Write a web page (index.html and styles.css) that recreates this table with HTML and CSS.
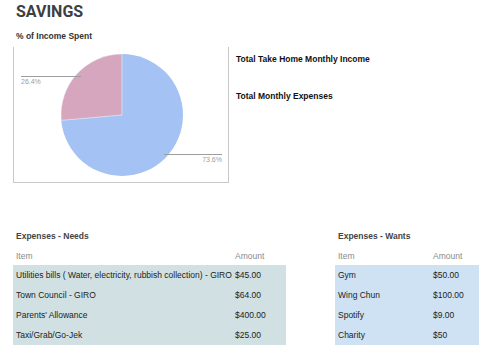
FILE: index.html
```html
<!DOCTYPE html>
<html>
<head>
<meta charset="utf-8">
<link rel="stylesheet" href="styles.css">
</head>
<body>
<div class="page">
  <h1 class="title">SAVINGS</h1>
  <div class="subtitle">% of Income Spent</div>
  <div class="top-row">
    <div class="chart-box">
      <svg class="pie" width="214" height="135" viewBox="0 0 214 135">
        <circle cx="108" cy="68" r="61" fill="#a4c2f4"/>
        <path d="M108 68 L108 7 A61 61 0 0 0 47.24 73.36 Z" fill="#d5a6bd" stroke="#fff" stroke-width="0.5"/>
        <line x1="7" y1="29.5" x2="67" y2="29.5" stroke="#9e9e9e" stroke-width="1"/>
        <text x="7" y="37" class="pie-label">26.4%</text>
        <line x1="150" y1="107.5" x2="208" y2="107.5" stroke="#9e9e9e" stroke-width="1"/>
        <text x="208" y="115" class="pie-label" text-anchor="end">73.6%</text>
      </svg>
    </div>
    <div class="totals">
      <div class="total">Total Take Home Monthly Income</div>
      <div class="total second">Total Monthly Expenses</div>
    </div>
  </div>
  <div class="tables">
    <div class="tbl needs">
      <div class="tbl-title">Expenses - Needs</div>
      <table>
        <thead><tr><th class="c-item">Item</th><th class="c-amt">Amount</th></tr></thead>
        <tbody>
          <tr><td>Utilities bills ( Water, electricity, rubbish collection) - GIRO</td><td>$45.00</td></tr>
          <tr><td>Town Council - GIRO</td><td>$64.00</td></tr>
          <tr><td>Parents' Allowance</td><td>$400.00</td></tr>
          <tr><td>Taxi/Grab/Go-Jek</td><td>$25.00</td></tr>
        </tbody>
      </table>
    </div>
    <div class="tbl wants">
      <div class="tbl-title">Expenses - Wants</div>
      <table>
        <thead><tr><th class="c-item">Item</th><th class="c-amt">Amount</th></tr></thead>
        <tbody>
          <tr><td>Gym</td><td>$50.00</td></tr>
          <tr><td>Wing Chun</td><td>$100.00</td></tr>
          <tr><td>Spotify</td><td>$9.00</td></tr>
          <tr><td>Charity</td><td>$50</td></tr>
        </tbody>
      </table>
    </div>
  </div>
</div>
</body>
</html>
```

FILE: styles.css
```css
html, body {
  margin: 0;
  padding: 0;
  background: #fff;
}
body {
  font-family: "Liberation Sans", Arial, sans-serif;
  color: #222;
  overflow: hidden;
}
.page {
  padding: 0 0 0 13px;
}
.title {
  margin: 0;
  padding: 2px 0 0 3px;
  font-family: Roboto, "Liberation Sans", sans-serif;
  font-size: 16px;
  line-height: 20px;
  font-weight: 700;
  color: #3c4043;
}
.subtitle {
  margin-top: 9px;
  padding-left: 3px;
  font-size: 8.5px;
  line-height: 10px;
  font-weight: 700;
  color: #333;
}
.top-row {
  display: flex;
  margin-top: 6px;
}
.chart-box {
  width: 214px;
  height: 135px;
  border: 1px solid #c8c8c8;
  border-top: none;
}
.pie {
  display: block;
}
.pie-label {
  font-family: "Liberation Sans", Arial, sans-serif;
  font-size: 7px;
  fill: #9e9e9e;
}
.totals {
  padding-left: 7px;
  padding-top: 7px;
}
.total {
  font-size: 8.5px;
  line-height: 10px;
  font-weight: 700;
  color: #111;
}
.total.second {
  margin-top: 27px;
}
.tables {
  display: flex;
  margin-top: 48px;
  gap: 49px;
}
.tbl-title {
  padding-left: 3px;
  font-size: 8.5px;
  line-height: 10px;
  font-weight: 700;
  color: #444;
}
table {
  border-collapse: collapse;
  table-layout: fixed;
  margin-top: 5px;
}
th, td {
  padding: 0 0 0 3px;
  height: 20px;
  font-size: 8.5px;
  text-align: left;
  white-space: nowrap;
}
th {
  font-weight: 400;
  color: #8a8a8a;
  height: 19px;
}
td {
  color: #222;
}
.needs table {
  width: 273px;
}
.needs tbody tr {
  background: #d0e0e3;
}
.needs .c-item { width: 216px; }
.wants table {
  width: 144px;
}
.wants tbody tr {
  background: #cfe2f3;
}
.wants .c-item { width: 92px; }
```
